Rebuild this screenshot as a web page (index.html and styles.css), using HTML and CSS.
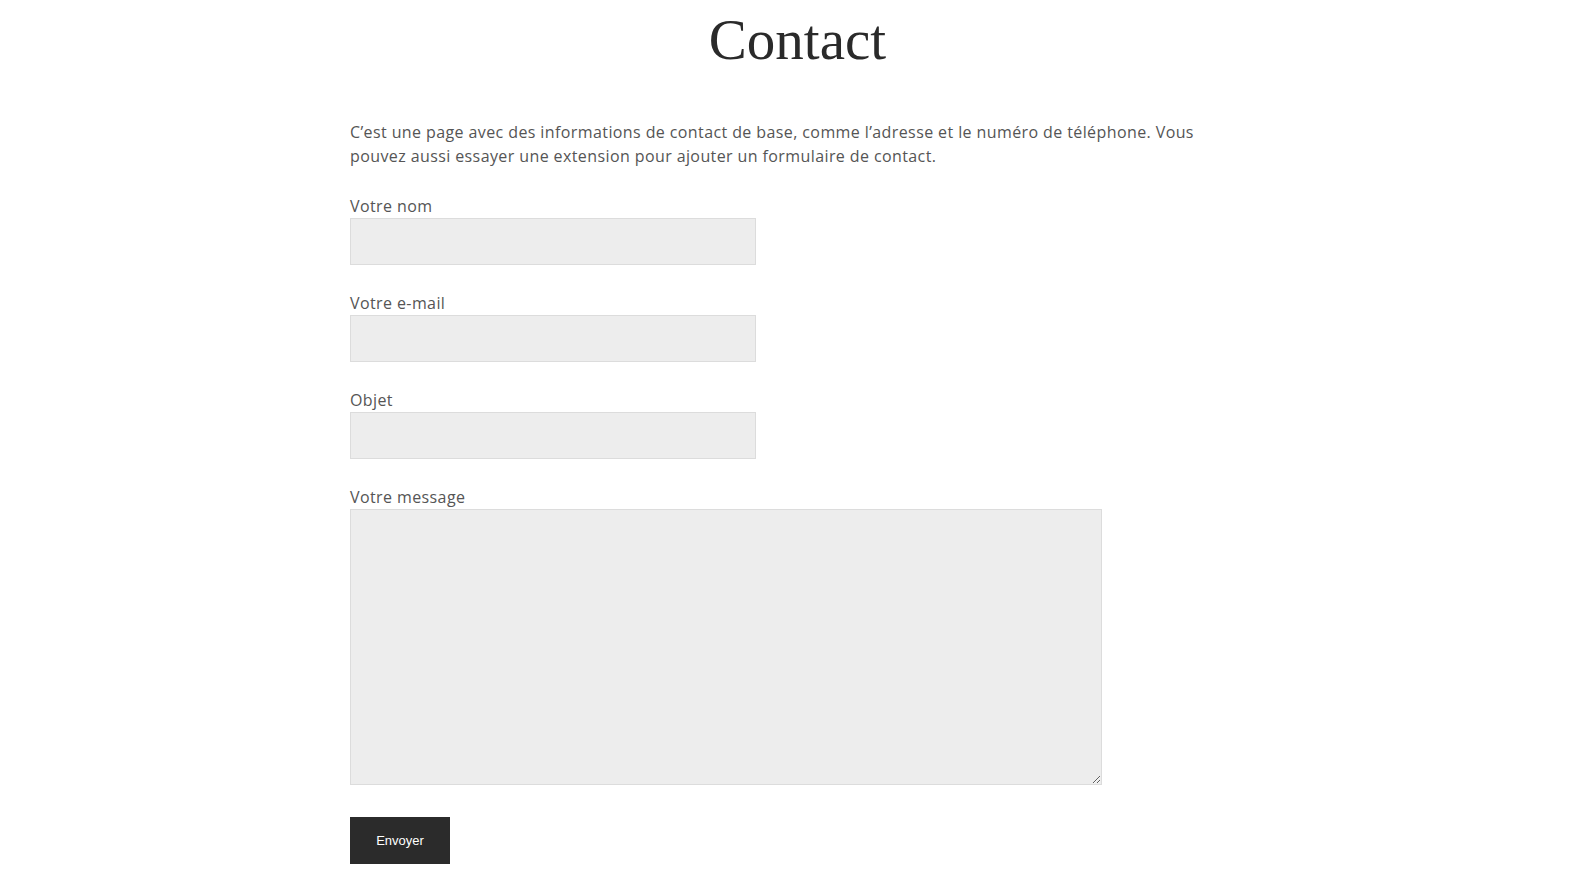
FILE: index.html
```html
<!DOCTYPE html>
<html lang="fr">
<head>
<meta charset="utf-8">
<title>Contact</title>
<link rel="stylesheet" href="styles.css">
</head>
<body>
<main class="page">
  <h1 class="title">Contact</h1>
  <div class="content">
    <p class="intro">C’est une page avec des informations de contact de base, comme l’adresse et le numéro de téléphone. Vous pouvez aussi essayer une extension pour ajouter un formulaire de contact.</p>
    <form class="form">
      <label class="field">
        <span class="label">Votre nom</span>
        <input class="input" type="text">
      </label>
      <label class="field">
        <span class="label">Votre e-mail</span>
        <input class="input" type="email">
      </label>
      <label class="field">
        <span class="label">Objet</span>
        <input class="input" type="text">
      </label>
      <label class="field">
        <span class="label">Votre message</span>
        <textarea class="textarea"></textarea>
      </label>
      <button class="submit" type="button">Envoyer</button>
    </form>
  </div>
</main>
</body>
</html>
```
FILE: styles.css
```css
html, body {
  margin: 0;
  padding: 0;
  background: #ffffff;
}
.page {
  padding-top: 6px;
}
.title {
  margin: 0;
  text-align: center;
  font-family: "Liberation Serif", "DejaVu Serif", serif;
  font-weight: 400;
  font-size: 57px;
  line-height: 68px;
  color: #2a2a2a;
}
.content {
  width: 895px;
  margin: 46px auto 0;
  font-family: "Open Sans", Lato, sans-serif;
  color: #555555;
  letter-spacing: 0.4px;
}
.intro {
  margin: 0;
  font-size: 16px;
  line-height: 24px;
}
.form {
  display: flex;
  flex-direction: column;
  align-items: flex-start;
  margin-top: 26px;
}
.field {
  display: flex;
  flex-direction: column;
  margin-bottom: 26px;
}
.label {
  font-size: 16px;
  line-height: 24px;
}
.input, .textarea {
  box-sizing: border-box;
  margin: 0;
  background: #ededed;
  border: 1px solid #dcdcdc;
  border-radius: 0;
  padding: 8px 10px;
  font-family: inherit;
  font-size: 15px;
  color: #555;
  outline: none;
}
.input {
  width: 406px;
  height: 47px;
}
.textarea {
  width: 752px;
  height: 276px;
  resize: both;
  display: block;
}
.submit {
  margin-top: 6px;
  width: 100px;
  height: 47px;
  border: 0;
  border-radius: 0;
  background: #2b2b2b;
  color: #ffffff;
  font-family: "Liberation Sans", Arial, sans-serif;
  font-size: 13px;
  letter-spacing: 0;
  padding: 0;
}
```
